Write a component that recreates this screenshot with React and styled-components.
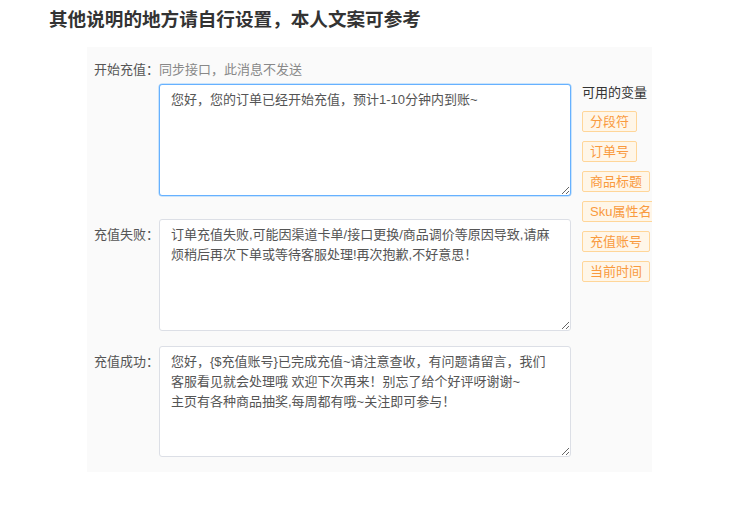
import React from 'react'
import styled, { createGlobalStyle } from 'styled-components'

const GlobalStyle = createGlobalStyle`
    html, body {
        margin: 0;
        padding: 0;
        background: #ffffff;
    }
    body {
        font-family: "Liberation Sans", "Noto Sans CJK SC", sans-serif;
    }
`

const variables = ['分段符', '订单号', '商品标题', 'Sku属性名', '充值账号', '当前时间']

const fields = [
    {
        label: '开始充值：',
        hint: '同步接口，此消息不发送',
        text: '您好，您的订单已经开始充值，预计1-10分钟内到账~',
        height: 112,
    },
    {
        label: '充值失败：',
        text: '订单充值失败,可能因渠道卡单/接口更换/商品调价等原因导致,请麻\n烦稍后再次下单或等待客服处理!再次抱歉,不好意思！',
        height: 112,
        gap: 23,
    },
    {
        label: '充值成功：',
        text: '您好，{$充值账号}已完成充值~请注意查收，有问题请留言，我们\n客服看见就会处理哦 欢迎下次再来！别忘了给个好评呀谢谢~\n主页有各种商品抽奖,每周都有哦~关注即可参与！',
        height: 111,
        gap: 15,
    },
]

export default function App() {
    return (
        <Page>
            <GlobalStyle />
            <Title>其他说明的地方请自行设置，本人文案可参考</Title>

            <Panel>
                <Form>
                    {fields.map((f) => (
                        <Field key={f.label} $gap={f.gap || 0}>
                            {f.hint ? (
                                <>
                                    <Label>{f.label}</Label>
                                    <Hint>{f.hint}</Hint>
                                    <span />
                                    <TextArea
                                        defaultValue={f.text}
                                        $height={f.height}
                                        $active
                                        spellCheck={false}
                                    />
                                </>
                            ) : (
                                <>
                                    <Label $offset>{f.label}</Label>
                                    <TextArea
                                        defaultValue={f.text}
                                        $height={f.height}
                                        spellCheck={false}
                                    />
                                </>
                            )}
                        </Field>
                    ))}
                </Form>

                <Vars>
                    <VarsTitle>可用的变量</VarsTitle>
                    {variables.map((v) => (
                        <Tag key={v}>{v}</Tag>
                    ))}
                </Vars>
            </Panel>
        </Page>
    )
}

const Page = styled.div`
    padding: 7px 0 40px 49px;
    font-family: "Liberation Sans", "Noto Sans CJK SC", sans-serif;
`

const Title = styled.h2`
    margin: 0;
    font-size: 18.6px;
    line-height: 26px;
    font-weight: 700;
    color: #333333;
`

const Panel = styled.div`
    width: 565px;
    box-sizing: border-box;
    margin: 14px 0 0 38px;
    padding: 13px 0 15px 7px;
    background: #fafafa;
    display: flex;
    align-items: flex-start;
    overflow: hidden;
`

const Form = styled.div`
    display: flex;
    flex-direction: column;
    flex-shrink: 0;
`

const Field = styled.div`
    display: grid;
    grid-template-columns: 65px 412px;
    row-gap: 4px;
    margin-top: ${(p) => p.$gap}px;
`

const Label = styled.label`
    font-size: 13px;
    line-height: 20px;
    color: #555555;
    white-space: nowrap;
    padding-top: ${(p) => (p.$offset ? '6px' : '0')};
`

const Hint = styled.span`
    font-size: 13px;
    line-height: 20px;
    color: #888888;
`

const TextArea = styled.textarea`
    display: block;
    width: 412px;
    height: ${(p) => p.$height}px;
    box-sizing: border-box;
    margin: 0;
    padding: 5px 11px;
    font-family: "Liberation Sans", "Noto Sans CJK SC", sans-serif;
    font-size: 13px;
    line-height: 20px;
    color: #555555;
    background: #ffffff;
    border: 1px solid ${(p) => (p.$active ? '#66b1ff' : '#dcdfe6')};
    box-shadow: ${(p) => (p.$active ? '0 0 0 0.5px #9ccdfb' : 'none')};
    border-radius: 3px;
    outline: none;
    resize: vertical;
`

const Vars = styled.div`
    display: flex;
    flex-direction: column;
    align-items: flex-start;
    gap: 9px;
    margin-left: 11px;
    padding-top: 23px;
    flex-shrink: 0;
`

const VarsTitle = styled.div`
    font-size: 13px;
    line-height: 20px;
    color: #333333;
    margin-bottom: -1px;
`

const Tag = styled.span`
    display: inline-block;
    height: 21px;
    box-sizing: border-box;
    padding: 0 7px;
    font-size: 13px;
    line-height: 19px;
    color: #f99a3e;
    background: #fff6e8;
    border: 1px solid #ffd699;
    border-radius: 2px;
    white-space: nowrap;
`
